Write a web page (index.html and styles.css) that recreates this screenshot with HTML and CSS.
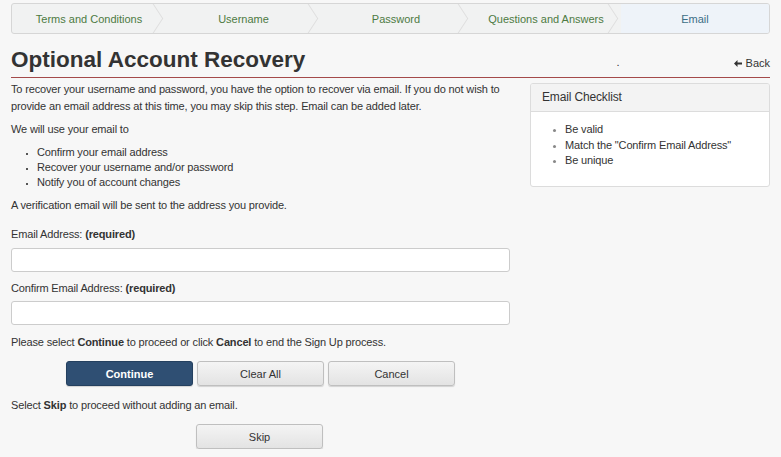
FILE: index.html
```html
<!DOCTYPE html>
<html>
<head>
<meta charset="utf-8">
<link rel="stylesheet" href="styles.css">
</head>
<body>
<nav class="steps">
  <div class="step done">Terms and Conditions</div>
  <div class="step done">Username</div>
  <div class="step done">Password</div>
  <div class="step done">Questions and Answers</div>
  <div class="step current">Email</div>
</nav>
<header class="title-row">
  <h1>Optional Account Recovery</h1>
  <span class="dot">.</span>
  <a class="back" href="#"><svg class="arrow" width="8" height="7" viewBox="0 0 8 7"><path d="M0 3.5 L3.5 0 L3.5 2.5 L8 2.5 L8 4.5 L3.5 4.5 L3.5 7 Z" fill="#333"/></svg> Back</a>
</header>
<div class="main">
  <div class="left">
    <p class="intro">To recover your username and password, you have the option to recover via email. If you do not wish to provide an email address at this time, you may skip this step. Email can be added later.</p>
    <p class="p1">We will use your email to</p>
    <ul class="uses">
      <li>Confirm your email address</li>
      <li>Recover your username and/or password</li>
      <li>Notify you of account changes</li>
    </ul>
    <p class="p2">A verification email will be sent to the address you provide.</p>
    <label class="lbl lbl1">Email Address: <b>(required)</b></label>
    <input class="field" type="text">
    <label class="lbl lbl2">Confirm Email Address: <b>(required)</b></label>
    <input class="field" type="text">
    <p class="p3">Please select <b>Continue</b> to proceed or click <b>Cancel</b> to end the Sign Up process.</p>
    <div class="btns">
      <button class="btn primary">Continue</button>
      <button class="btn">Clear All</button>
      <button class="btn">Cancel</button>
    </div>
    <p class="p4">Select <b>Skip</b> to proceed without adding an email.</p>
    <div class="btns skiprow">
      <button class="btn">Skip</button>
    </div>
  </div>
  <aside class="panel">
    <div class="panel-head">Email Checklist</div>
    <ul class="panel-body">
      <li>Be valid</li>
      <li>Match the "Confirm Email Address"</li>
      <li>Be unique</li>
    </ul>
  </aside>
</div>
</body>
</html>
```
FILE: styles.css
```css
html, body { margin: 0; padding: 0; }
body {
  background: #f7f7f7;
  font-family: "Liberation Sans", Arial, sans-serif;
  font-size: 11px;
  letter-spacing: -0.15px;
  color: #333;
  padding: 3px 11px 0 11px;
  width: 759px;
}
.steps {
  display: grid;
  grid-template-columns: 154px 155px 150px 150px 1fr;
  height: 29px;
  border: 1px solid #d6d6d6;
  border-radius: 3px;
  background: #f1f2f2;
  overflow: hidden;
  letter-spacing: 0;
}
.step {
  display: flex;
  align-items: center;
  justify-content: center;
  color: #4d7a42;
  font-size: 11px;
  position: relative;
  padding-top: 1px;
  box-sizing: border-box;
}
.step.done::after {
  content: "";
  position: absolute;
  right: 4px;
  top: -1px;
  width: 20px;
  height: 20px;
  border-right: 1px solid #dedede;
  border-top: 1px solid #dedede;
  transform: translateY(5px) rotate(45deg) skew(12deg, 12deg);
}
.step.current { background: #eef3f9; color: #3c6e86; }
.title-row {
  display: flex;
  align-items: flex-start;
  height: 43px;
  border-bottom: 1px solid #a44a4a;
  letter-spacing: 0;
}
h1 {
  margin: 12px 0 0 0;
  font-size: 22.5px;
  font-weight: bold;
  color: #333;
  flex: 1;
  line-height: 28px;
}
.dot { margin: 20px 115px 0 0; line-height: 17px; }
.back {
  color: #333;
  text-decoration: none;
  font-size: 11px;
  line-height: 17px;
  margin: 21px 0 0 0;
}
.arrow { vertical-align: 0; }
.main {
  display: flex;
  align-items: flex-start;
  margin-top: 3px;
}
.left { width: 519px; }
p { margin: 0; line-height: 17px; }
.p1 { margin-top: 6px; }
.uses {
  margin: 7px 0 0 0;
  padding-left: 26px;
  list-style: square;
  line-height: 15px;
}
.uses li::marker { font-size: 7px; color: #555; }
.p2 { margin-top: 6.5px; }
.lbl { display: block; line-height: 17px; }
.lbl1 { margin-top: 12.5px; }
.lbl2 { margin-top: 8px; }
.field {
  display: block;
  box-sizing: border-box;
  width: 499px;
  height: 24px;
  border: 1px solid #ccc;
  border-radius: 3px;
  background: #fff;
  margin: 4.5px 0 0 0;
}
.p3 { margin-top: 8.5px; }
.btns {
  display: flex;
  gap: 4px;
  padding-left: 55px;
  margin-top: 10.5px;
}
.btn {
  box-sizing: border-box;
  width: 127px;
  height: 25px;
  border: 1px solid #bfbfbf;
  border-radius: 3px;
  background: linear-gradient(#f4f4f4, #e3e3e3);
  font-family: "Liberation Sans", Arial, sans-serif;
  font-size: 11px;
  color: #333;
  box-shadow: 0 1px 1px rgba(0,0,0,0.15);
  padding: 0;
}
.btn.primary {
  background: #2f4f73;
  border-color: #24405f;
  color: #fff;
  font-weight: bold;
}
.p4 { margin-top: 11px; }
.skiprow { padding-left: 185px; margin-top: 10px; }
.panel {
  width: 240px;
  box-sizing: border-box;
  height: 104px;
  margin-top: 2px;
  margin-left: auto;
  border: 1px solid #dcdcdc;
  border-radius: 3px;
  background: #fff;
  overflow: hidden;
}
.panel-head {
  height: 27px;
  line-height: 27px;
  background: #f3f3f3;
  border-bottom: 1px solid #dcdcdc;
  padding-left: 11px;
  font-size: 12px;
  color: #333;
}
.panel-body {
  margin: 10px 0 0 0;
  padding-left: 34px;
  line-height: 15.5px;
  list-style: disc;
}
.panel-body li::marker { color: #888; font-size: 9px; }
```
